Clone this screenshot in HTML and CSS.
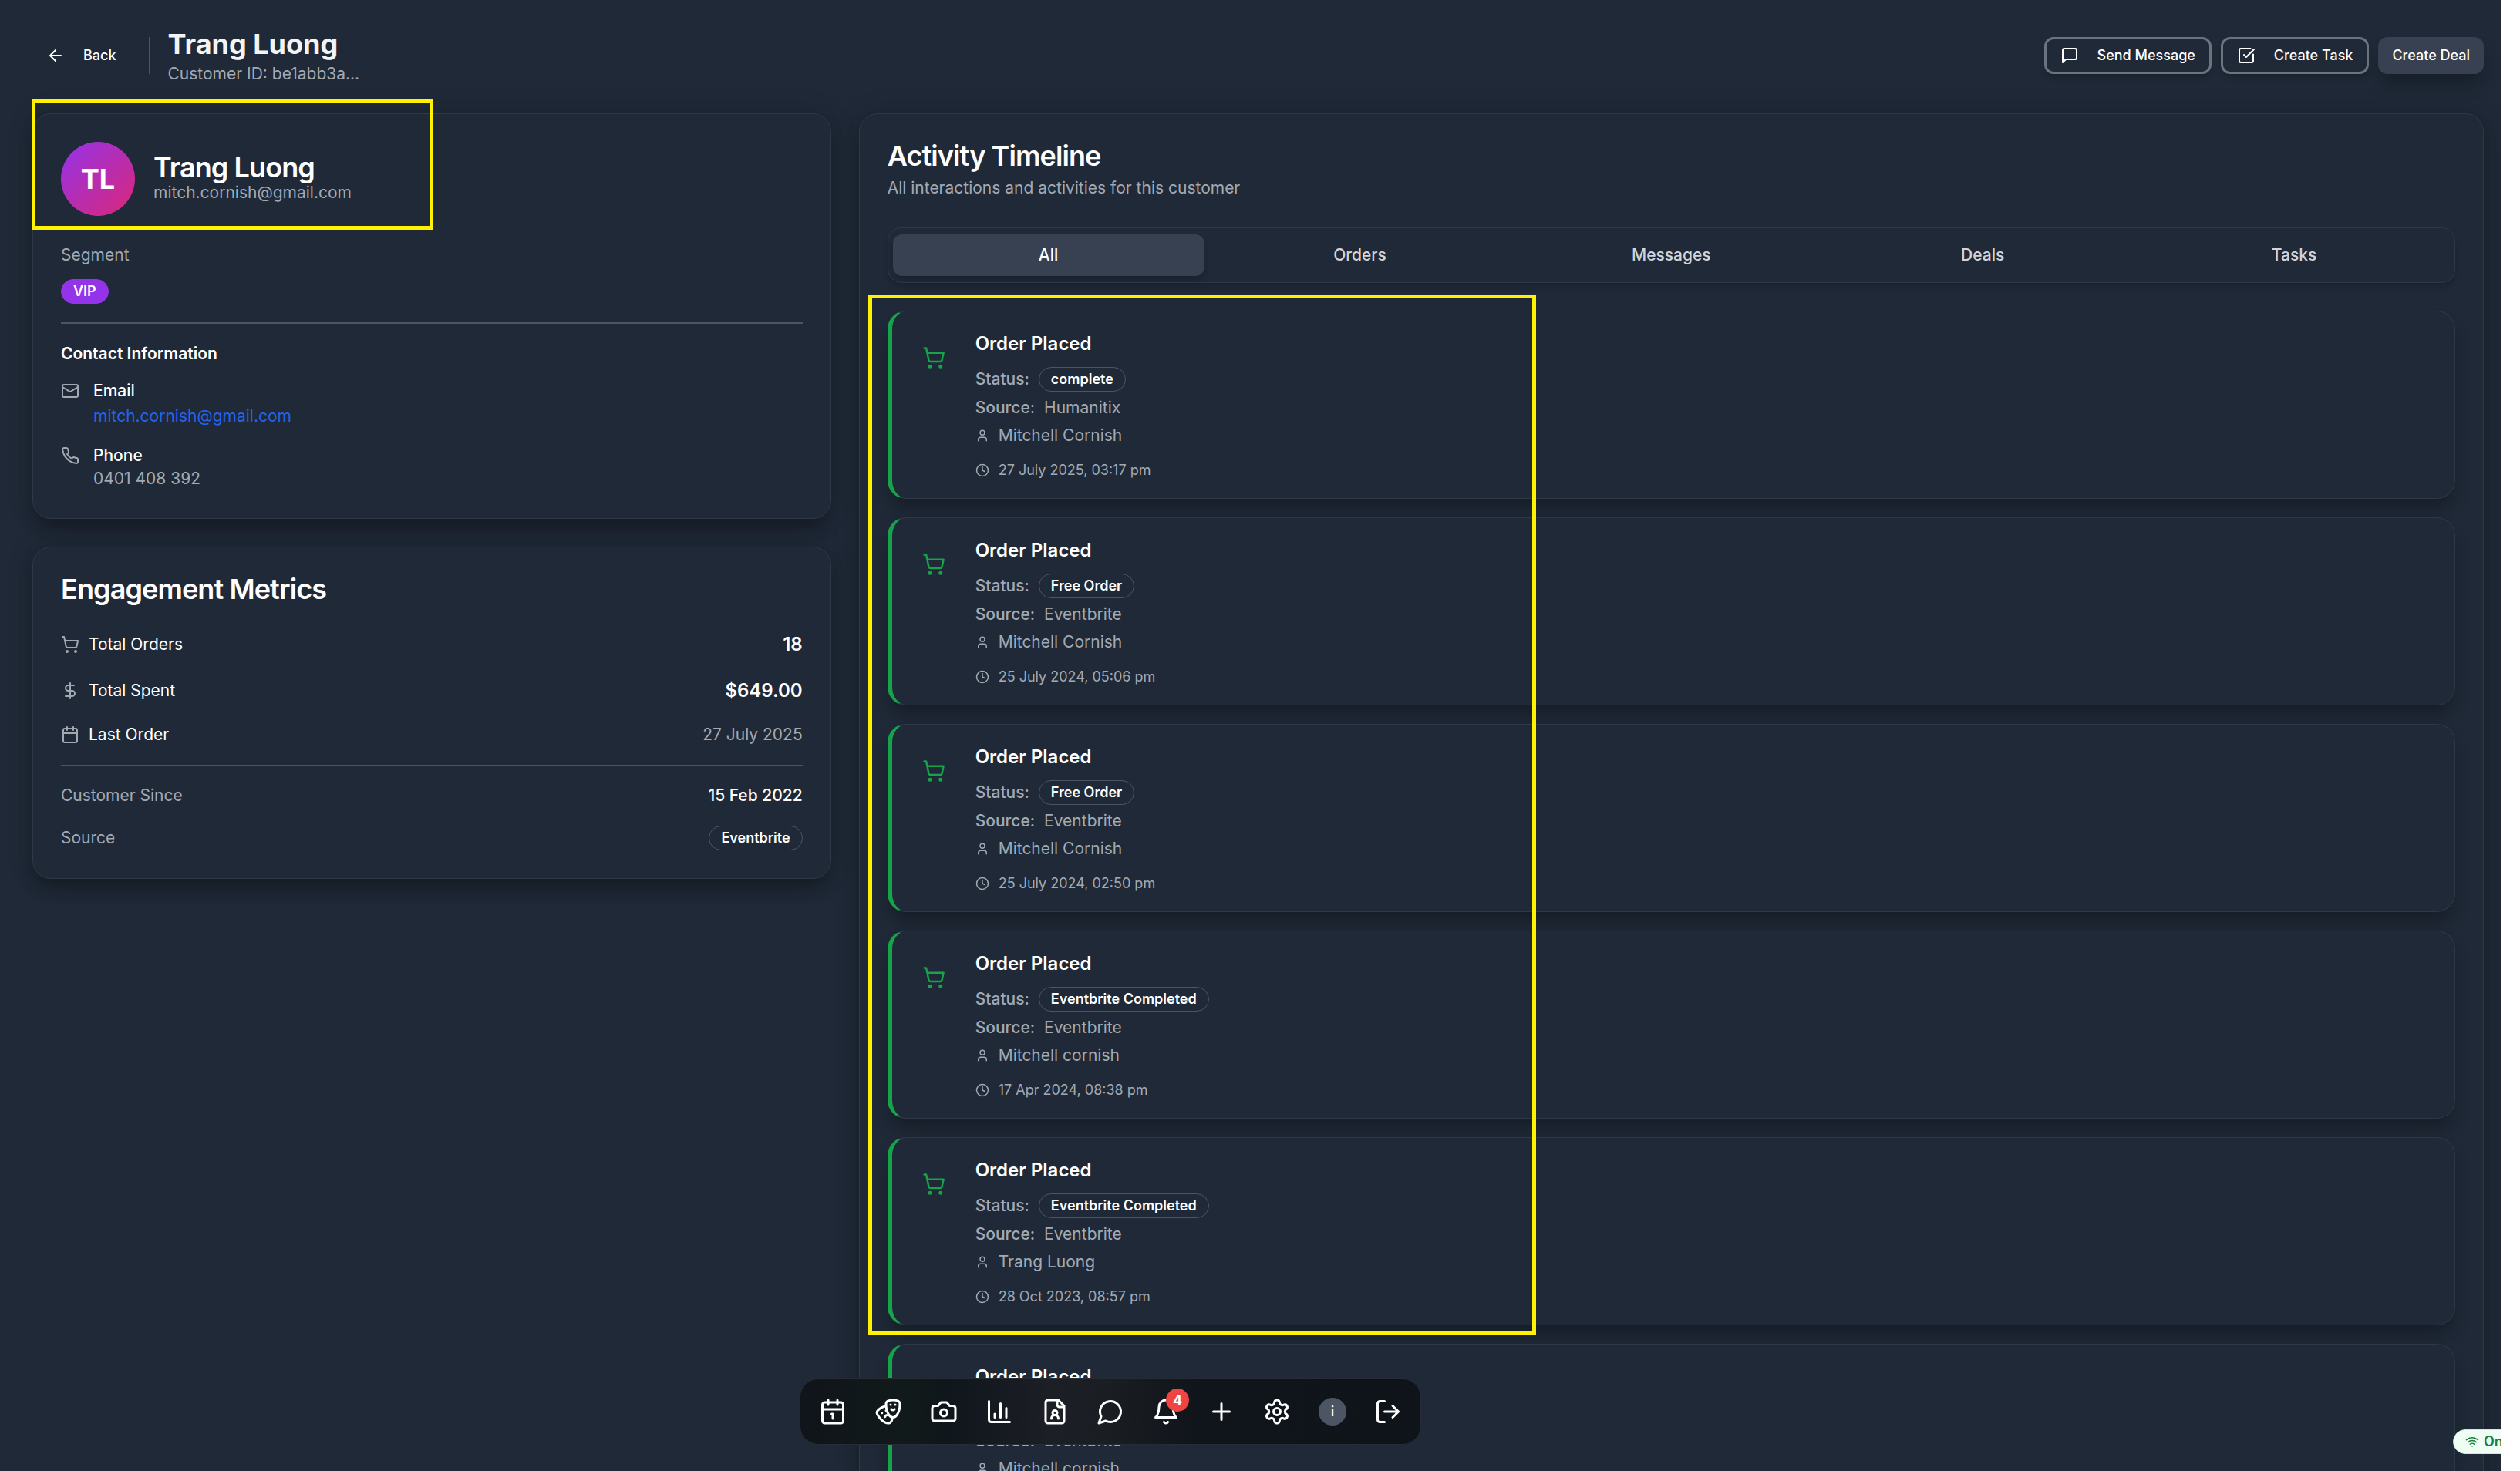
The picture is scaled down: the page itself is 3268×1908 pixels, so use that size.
FILE: index.html
```html
<!DOCTYPE html>
<html lang="en">
<head>
<meta charset="utf-8">
<title>Trang Luong – Customer</title>
<link rel="stylesheet" href="styles.css">
</head>
<body>
<svg class="sprite" aria-hidden="true">
  <symbol id="cart" viewBox="0 0 24 24"><circle cx="8" cy="21" r="1"/><circle cx="19" cy="21" r="1"/><path d="M2.05 2.05h2l2.66 12.42a2 2 0 0 0 2 1.58h9.78a2 2 0 0 0 1.95-1.57l1.65-7.43H5.12"/></symbol>
  <symbol id="user" viewBox="0 0 24 24"><circle cx="12" cy="7" r="4"/><path d="M19 21v-2a4 4 0 0 0-4-4H9a4 4 0 0 0-4 4v2"/></symbol>
  <symbol id="clock" viewBox="0 0 24 24"><circle cx="12" cy="12" r="10"/><path d="M12 6v6l4 2"/></symbol>
</svg>
<div class="app">
  <header class="topbar">
    <button class="btn btn-ghost"><svg class="icon" viewBox="0 0 24 24"><path d="m12 19-7-7 7-7M19 12H5"/></svg>Back</button>
    <div class="topbar-rule"></div>
    <div class="topbar-title">
      <h1>Trang Luong</h1>
      <p class="muted">Customer ID: be1abb3a...</p>
    </div>
    <div class="actions">
      <button class="btn btn-outline"><svg class="icon" viewBox="0 0 24 24"><path d="M21 15a2 2 0 0 1-2 2H7l-4 4V5a2 2 0 0 1 2-2h14a2 2 0 0 1 2 2z"/></svg>Send Message</button>
      <button class="btn btn-outline"><svg class="icon" viewBox="0 0 24 24"><path d="m9 11 3 3L22 4"/><path d="M21 10.500V19a2 2 0 0 1-2 2H5a2 2 0 0 1-2-2V5a2 2 0 0 1 2-2h12.500"/></svg>Create Task</button>
      <button class="btn btn-solid">Create Deal</button>
    </div>
  </header>

  <main class="columns">
    <div class="side">
      <section class="card">
        <div class="profile">
          <div class="avatar">TL</div>
          <div>
            <h2>Trang Luong</h2>
            <p class="muted">mitch.cornish@gmail.com</p>
          </div>
        </div>
        <div class="segment">
          <p class="muted">Segment</p>
          <span class="badge badge-vip">VIP</span>
        </div>
        <hr class="rule rule-thick">
        <h3>Contact Information</h3>
        <div class="contact">
          <svg class="icon muted" viewBox="0 0 24 24"><rect x="2" y="4" width="20" height="16" rx="2"/><path d="m22 7-8.97 5.7a1.94 1.94 0 0 1-2.06 0L2 7"/></svg>
          <div>
            <p class="medium">Email</p>
            <a class="link" href="mailto:mitch.cornish@gmail.com">mitch.cornish@gmail.com</a>
          </div>
        </div>
        <div class="contact">
          <svg class="icon muted" viewBox="0 0 24 24"><path d="M22 16.92v3a2 2 0 0 1-2.18 2 19.79 19.79 0 0 1-8.63-3.07 19.5 19.5 0 0 1-6-6 19.79 19.79 0 0 1-3.07-8.67A2 2 0 0 1 4.11 2h3a2 2 0 0 1 2 1.72 12.84 12.84 0 0 0 .7 2.81 2 2 0 0 1-.45 2.11L8.09 9.91a16 16 0 0 0 6 6l1.27-1.27a2 2 0 0 1 2.11-.45 12.84 12.84 0 0 0 2.81.7A2 2 0 0 1 22 16.92z"/></svg>
          <div>
            <p class="medium">Phone</p>
            <p class="muted">0401 408 392</p>
          </div>
        </div>
      </section>

      <section class="card metrics">
        <h2>Engagement Metrics</h2>
        <div class="rows">
          <div class="row"><span class="label"><svg class="icon muted"><use href="#cart"/></svg>Total Orders</span><strong class="figure">18</strong></div>
          <div class="row"><span class="label"><svg class="icon muted" viewBox="0 0 24 24"><path d="M12 2v20M17 5H9.500a3.500 3.500 0 0 0 0 7h5a3.500 3.500 0 0 1 0 7H6"/></svg>Total Spent</span><strong class="figure">$649.00</strong></div>
          <div class="row"><span class="label"><svg class="icon muted" viewBox="0 0 24 24"><path d="M8 2v4M16 2v4M3 10h18"/><rect x="3" y="4" width="18" height="18" rx="2"/></svg>Last Order</span><span class="muted">27 July 2025</span></div>
          <hr class="rule">
          <div class="row"><span class="muted">Customer Since</span><span class="medium">15 Feb 2022</span></div>
          <div class="row"><span class="muted">Source</span><span class="badge">Eventbrite</span></div>
        </div>
      </section>
    </div>

    <section class="card timeline">
      <h2>Activity Timeline</h2>
      <p class="muted subtitle">All interactions and activities for this customer</p>
      <div class="tabs" role="tablist">
        <button class="tab active" role="tab" aria-selected="true">All</button>
        <button class="tab" role="tab">Orders</button>
        <button class="tab" role="tab">Messages</button>
        <button class="tab" role="tab">Deals</button>
        <button class="tab" role="tab">Tasks</button>
      </div>
      <div class="events">
        <article class="event">
          <div class="event-icon"><svg><use href="#cart"/></svg></div>
          <div class="event-body">
            <h4>Order Placed</h4>
            <p class="line"><b>Status:</b><span class="badge">complete</span></p>
            <p class="line"><b>Source:</b>Humanitix</p>
            <p class="line"><svg class="mini"><use href="#user"/></svg>Mitchell Cornish</p>
            <p class="line when"><svg class="mini"><use href="#clock"/></svg>27 July 2025, 03:17 pm</p>
          </div>
        </article>
        <article class="event">
          <div class="event-icon"><svg><use href="#cart"/></svg></div>
          <div class="event-body">
            <h4>Order Placed</h4>
            <p class="line"><b>Status:</b><span class="badge">Free Order</span></p>
            <p class="line"><b>Source:</b>Eventbrite</p>
            <p class="line"><svg class="mini"><use href="#user"/></svg>Mitchell Cornish</p>
            <p class="line when"><svg class="mini"><use href="#clock"/></svg>25 July 2024, 05:06 pm</p>
          </div>
        </article>
        <article class="event">
          <div class="event-icon"><svg><use href="#cart"/></svg></div>
          <div class="event-body">
            <h4>Order Placed</h4>
            <p class="line"><b>Status:</b><span class="badge">Free Order</span></p>
            <p class="line"><b>Source:</b>Eventbrite</p>
            <p class="line"><svg class="mini"><use href="#user"/></svg>Mitchell Cornish</p>
            <p class="line when"><svg class="mini"><use href="#clock"/></svg>25 July 2024, 02:50 pm</p>
          </div>
        </article>
        <article class="event">
          <div class="event-icon"><svg><use href="#cart"/></svg></div>
          <div class="event-body">
            <h4>Order Placed</h4>
            <p class="line"><b>Status:</b><span class="badge">Eventbrite Completed</span></p>
            <p class="line"><b>Source:</b>Eventbrite</p>
            <p class="line"><svg class="mini"><use href="#user"/></svg>Mitchell cornish</p>
            <p class="line when"><svg class="mini"><use href="#clock"/></svg>17 Apr 2024, 08:38 pm</p>
          </div>
        </article>
        <article class="event">
          <div class="event-icon"><svg><use href="#cart"/></svg></div>
          <div class="event-body">
            <h4>Order Placed</h4>
            <p class="line"><b>Status:</b><span class="badge">Eventbrite Completed</span></p>
            <p class="line"><b>Source:</b>Eventbrite</p>
            <p class="line"><svg class="mini"><use href="#user"/></svg>Trang Luong</p>
            <p class="line when"><svg class="mini"><use href="#clock"/></svg>28 Oct 2023, 08:57 pm</p>
          </div>
        </article>
        <article class="event">
          <div class="event-icon"><svg><use href="#cart"/></svg></div>
          <div class="event-body">
            <h4>Order Placed</h4>
            <p class="line"><b>Status:</b><span class="badge">Eventbrite Completed</span></p>
            <p class="line"><b>Source:</b>Eventbrite</p>
            <p class="line"><svg class="mini"><use href="#user"/></svg>Mitchell cornish</p>
          </div>
        </article>
      </div>
    </section>
  </main>

  <div class="highlight highlight-profile"></div>
  <div class="highlight highlight-orders"></div>

  <nav class="dock" aria-label="Main">
    <button aria-label="Calendar"><svg viewBox="0 0 24 24"><path d="M11 14h1v4M16 2v4M3 10h18M8 2v4"/><rect x="3" y="4" width="18" height="18" rx="2"/></svg></button>
    <button aria-label="Shows"><svg viewBox="0 0 24 24"><path d="M10 11h.01M14 6h.01M18 6h.01M6.500 13.100h.01M22 5c0 9-4 12-6 12s-6-3-6-12c0-2 2-3 6-3s6 1 6 3M17.400 9.900c-.8.8-2 .8-2.800 0M10.100 7.100C9 7.200 7.700 7.700 6 8.600c-3.500 2-4.700 3.900-3.700 5.600 4.500 7.800 9.500 8.400 11.200 7.400.9-.5 1.900-2.100 1.900-4.700M9.100 16.500c.3-1.100 1.400-1.700 2.400-1.400"/></svg></button>
    <button aria-label="Photos"><svg viewBox="0 0 24 24"><path d="M14.500 4h-5L7 7H4a2 2 0 0 0-2 2v9a2 2 0 0 0 2 2h16a2 2 0 0 0 2-2V9a2 2 0 0 0-2-2h-3l-2.500-3z"/><circle cx="12" cy="13" r="3"/></svg></button>
    <button aria-label="Reports"><svg viewBox="0 0 24 24"><path d="M3 3v16a2 2 0 0 0 2 2h16M18 17V9M13 17V5M8 17v-3"/></svg></button>
    <button aria-label="Contacts"><svg viewBox="0 0 24 24"><path d="M15 2H6a2 2 0 0 0-2 2v16a2 2 0 0 0 2 2h12a2 2 0 0 0 2-2V7ZM14 2v4a2 2 0 0 0 2 2h4M15 18a3 3 0 1 0-6 0"/><circle cx="12" cy="13" r="2"/></svg></button>
    <button aria-label="Messages"><svg viewBox="0 0 24 24"><path d="M7.900 20A9 9 0 1 0 4 16.100L2 22Z"/></svg></button>
    <button aria-label="Notifications"><svg viewBox="0 0 24 24"><path d="M6 8a6 6 0 0 1 12 0c0 7 3 9 3 9H3s3-2 3-9M10.300 21a1.940 1.940 0 0 0 3.400 0"/></svg><span class="count">4</span></button>
    <button aria-label="Add"><svg viewBox="0 0 24 24"><path d="M12 5v14M5 12h14"/></svg></button>
    <button aria-label="Settings"><svg viewBox="0 0 24 24"><path d="M12.220 2h-.44a2 2 0 0 0-2 2v.18a2 2 0 0 1-1 1.730l-.43.25a2 2 0 0 1-2 0l-.15-.08a2 2 0 0 0-2.730.73l-.22.38a2 2 0 0 0 .73 2.730l.15.1a2 2 0 0 1 1 1.720v.51a2 2 0 0 1-1 1.740l-.15.09a2 2 0 0 0-.73 2.730l.22.38a2 2 0 0 0 2.730.73l.15-.08a2 2 0 0 1 2 0l.43.25a2 2 0 0 1 1 1.730V20a2 2 0 0 0 2 2h.44a2 2 0 0 0 2-2v-.18a2 2 0 0 1 1-1.730l.43-.25a2 2 0 0 1 2 0l.15.08a2 2 0 0 0 2.730-.73l.22-.39a2 2 0 0 0-.73-2.730l-.15-.08a2 2 0 0 1-1-1.740v-.5a2 2 0 0 1 1-1.740l.15-.09a2 2 0 0 0 .73-2.730l-.22-.38a2 2 0 0 0-2.730-.73l-.15.08a2 2 0 0 1-2 0l-.43-.25a2 2 0 0 1-1-1.730V4a2 2 0 0 0-2-2z"/><circle cx="12" cy="12" r="3"/></svg></button>
    <button aria-label="Info"><span class="info">i</span></button>
    <button aria-label="Log out"><svg viewBox="0 0 24 24"><path d="M9 21H5a2 2 0 0 1-2-2V5a2 2 0 0 1 2-2h4M16 17l5-5-5-5M21 12H9"/></svg></button>
  </nav>

  <div class="status"><svg class="mini" viewBox="0 0 24 24"><path d="M12 20h.01M2 8.820a15 15 0 0 1 20 0M5 12.859a10 10 0 0 1 14 0M8.500 16.429a5 5 0 0 1 7 0"/></svg>Online</div>
</div>
</body>
</html>
```

FILE: styles.css
```css
* { box-sizing: border-box; margin: 0; }

body {
  background: #fff;
  color: #fff;
  font: 400 21px/30px Inter, "Liberation Sans", sans-serif;
}

button { font: inherit; color: inherit; background: none; border: 0; padding: 0; }

svg {
  flex: none;
  fill: none;
  stroke: currentColor;
  stroke-width: 2;
  stroke-linecap: round;
  stroke-linejoin: round;
}

.sprite { position: absolute; width: 0; height: 0; }

.app {
  position: relative;
  height: 100vh;
  margin-right: 25px;
  padding: 33px 22px 0 42px;
  overflow: hidden;
  background: #1f2937;
}

.icon { width: 24px; height: 24px; }
.mini { width: 18px; height: 18px; }
.muted { color: #a3a9b3; }
.medium { font-weight: 500; }

h1, h2 { font-size: 36px; font-weight: 600; line-height: 36px; letter-spacing: -0.025em; }
h1 { font-weight: 700; line-height: 48px; letter-spacing: 0; color: #f3f4f6; }
h3 { font-size: 21px; font-weight: 600; line-height: 30px; }
h4 { font-size: 24px; font-weight: 600; line-height: 36px; }

/* Header */
.topbar { display: flex; align-items: center; gap: 24px; margin-bottom: 36px; }
.topbar-rule { width: 1px; height: 48px; background: #4b5563; }
.actions { display: flex; gap: 12px; margin-left: auto; }

.btn {
  display: flex;
  align-items: center;
  gap: 24px;
  height: 48px;
  padding: 0 18px;
  border-radius: 12px;
  font-size: 18px;
  font-weight: 500;
  line-height: 24px;
}
.btn-outline { border: 3px solid #6b7280; box-shadow: 0 6px 9px -2px rgba(0, 0, 0, .2); }
.btn-solid { background: #374151; box-shadow: 0 15px 22px -4px rgba(0, 0, 0, .3); }

/* Cards */
.columns { display: grid; grid-template-columns: repeat(3, 1fr); gap: 36px; }
.side { display: flex; flex-direction: column; align-self: start; gap: 36px; }
.card {
  padding: 36px;
  border: 1px solid #2e3847;
  border-radius: 24px;
  background: #1f2937;
  box-shadow: 0 15px 22px -4px rgba(0, 0, 0, .3), 0 0 36px rgba(0, 0, 0, .12);
}

.profile { display: flex; align-items: center; gap: 24px; margin-bottom: 36px; }
.avatar {
  display: grid;
  place-items: center;
  width: 96px;
  height: 96px;
  border-radius: 50%;
  background: linear-gradient(to bottom right, #9333ea, #db2777);
  font-size: 36px;
  font-weight: 700;
}
.segment { display: grid; justify-items: start; gap: 16px; }

.badge {
  padding: 3px 15px;
  border: 1px solid #4b5563;
  border-radius: 16px;
  color: #fff;
  font-size: 18px;
  font-weight: 600;
  line-height: 24px;
}
.badge-vip { border-color: #9333ea; background: #9333ea; }

.rule { width: 100%; height: 1px; border: 0; background: #4b5563; }
.rule-thick { height: 2px; margin: 24px 0; }

.contact { display: flex; gap: 18px; margin-top: 18px; }
.contact .icon { margin-top: 3px; }
.link { display: block; color: #2563eb; line-height: 36px; text-decoration: none; }

.rows { display: grid; gap: 24px; margin-top: 36px; }
.row { display: flex; align-items: center; justify-content: space-between; }
.label { display: flex; align-items: center; gap: 12px; }
.figure { font-size: 24px; font-weight: 600; line-height: 36px; }

/* Timeline */
.timeline { grid-column: span 2; }
.subtitle { margin-top: 9px; }
.tabs {
  display: grid;
  grid-template-columns: repeat(5, 1fr);
  align-items: center;
  height: 72px;
  margin: 36px 0;
  padding: 0 6px;
  border: 1px solid #2e3847;
  border-radius: 18px;
  box-shadow: 0 6px 9px -2px rgba(0, 0, 0, .2);
}
.tab { height: 54px; border-radius: 12px; color: #d1d5db; font-weight: 500; }
.tab.active { background: #374151; color: #fff; box-shadow: 0 6px 9px -2px rgba(0, 0, 0, .2); }

.events { display: grid; gap: 24px; }
.event {
  display: flex;
  gap: 24px;
  padding: 24px;
  border: 1px solid #2e3847;
  border-left: 6px solid #16a34a;
  border-radius: 24px;
  background: #1f2937;
  box-shadow: 0 15px 22px -4px rgba(0, 0, 0, .3);
}
.event-icon {
  display: grid;
  place-items: center;
  width: 60px;
  height: 60px;
  margin-top: 6px;
  color: #16a34a;
}
.event-icon svg { width: 30px; height: 30px; }
.event-body { display: grid; gap: 6px; }
.event-body h4 { margin-bottom: 6px; }
.line { display: flex; align-items: center; gap: 12px; color: #a3a9b3; }
.line b { font-weight: 500; }
.when { margin-top: 12px; font-size: 18px; line-height: 24px; }

/* Highlight frames over the page */
.highlight { position: absolute; border: 5px solid #fff200; }
.highlight-profile { left: 41px; top: 128px; width: 521px; height: 170px; }
.highlight-orders { left: 1126px; top: 382px; width: 866px; height: 1350px; }

/* Floating dock */
.dock {
  position: absolute;
  left: 1037px;
  bottom: 34px;
  display: flex;
  gap: 12px;
  padding: 12px;
  border: 1px solid #272c33;
  border-radius: 24px;
  background: linear-gradient(to right, #10141b, #111a1a 17%, #0f161c 24%, #1c1f25 40%, #1a1d22 50%, #10151b 64%, #0f141a);
}
.dock button { position: relative; display: grid; place-items: center; width: 60px; height: 60px; }
.dock svg { width: 36px; height: 36px; }
.count {
  position: absolute;
  top: 0;
  left: 30px;
  width: 30px;
  height: 30px;
  border-radius: 50%;
  background: #ef4444;
  font-size: 18px;
  font-weight: 700;
}
.info {
  width: 36px;
  height: 36px;
  border-radius: 50%;
  background: #4b5563;
  font-size: 18px;
  font-weight: 500;
  line-height: 36px;
}

.status {
  position: absolute;
  left: calc(100% - 62px);
  bottom: 22px;
  display: flex;
  align-items: center;
  gap: 6px;
  padding: 3px 15px;
  border: 1px solid #bbf7d0;
  border-radius: 16px;
  background: #f0fdf4;
  color: #15803d;
  font-size: 18px;
  font-weight: 600;
  line-height: 24px;
}
```
